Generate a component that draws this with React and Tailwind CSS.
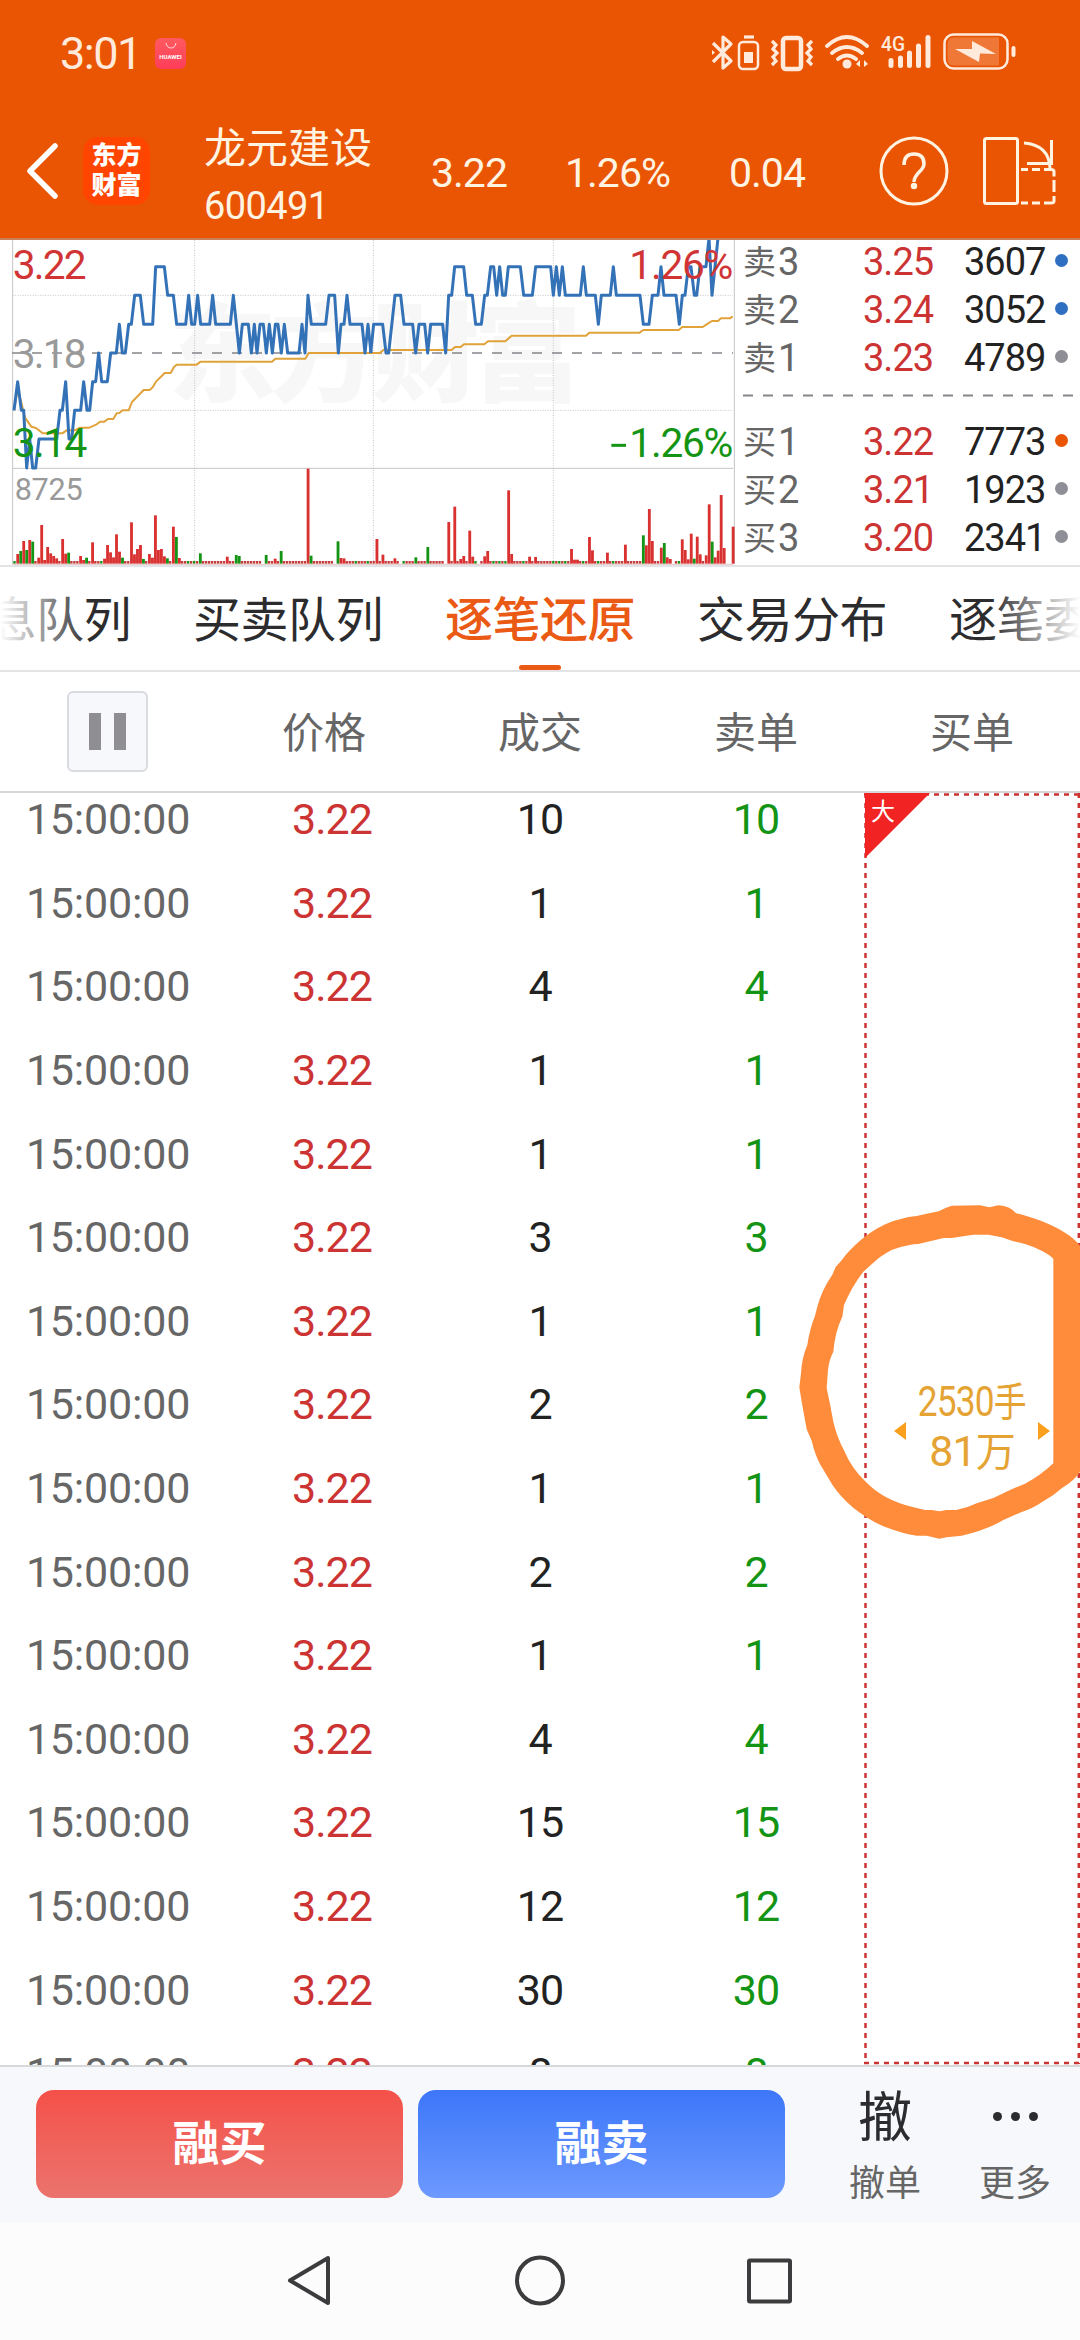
import React from "react";

// quotes shown next to the chart
const asks = [
  { label: "卖3", price: "3.25", volume: "3607", dot: "bg-[#2f6fc1]" },
  { label: "卖2", price: "3.24", volume: "3052", dot: "bg-[#2f6fc1]" },
  { label: "卖1", price: "3.23", volume: "4789", dot: "bg-[#8e8e96]" },
];

const bids = [
  { label: "买1", price: "3.22", volume: "7773", dot: "bg-[#ea5504]" },
  { label: "买2", price: "3.21", volume: "1923", dot: "bg-[#8e8e96]" },
  { label: "买3", price: "3.20", volume: "2341", dot: "bg-[#8e8e96]" },
];

const tabs = ["信息队列", "买卖队列", "逐笔还原", "交易分布", "逐笔委托"];

const trades = [10, 1, 4, 1, 1, 3, 1, 2, 1, 2, 1, 4, 15, 12, 30, 8];

// the chart is drawn three units to the pixel
const priceMorning =
  "42,541 53,455 64,541 71,541 80,714 89,627 98,714 107,714 117,627 170,627 180,541 187,541 197,455 207,627 215,627 224,541 242,541 251,455 261,541 269,541 278,455 287,455 296,369 305,455 322,455 332,369 349,369 358,283 367,369 376,369 386,283 394,283 404,196 421,196 431,283 458,283 467,110 493,110 503,196 520,196 530,283 557,283 566,196 575,283 584,283 593,196 602,283 629,283 638,196 647,283 691,283 700,196 718,369 727,283 745,283 754,369 763,283 771,369 780,283 790,283 799,369 808,283 817,369 826,283 834,283 844,369 853,283 863,369 897,369 906,283 915,369 924,196 934,283 977,283 987,196 1004,196 1015,369 1023,283 1032,283 1041,196 1050,283 1086,283 1095,369 1104,283 1113,369";
const priceAfternoon =
  "2,369 11,283 38,283 48,369 56,369 75,196 92,196 102,283 128,283 137,369 147,283 164,283 173,369 182,283 218,283 227,369 236,196 245,196 254,110 281,110 290,196 307,196 317,283 334,283 344,196 352,196 362,110 371,110 380,196 389,110 398,196 406,196 415,110 451,110 461,196 487,196 497,110 542,110 550,196 559,110 568,196 577,110 586,196 631,196 640,110 649,196 676,196 685,283 694,196 721,196 730,110 739,196 810,196 820,283 837,283 847,196 864,196 873,110 882,196 918,196 928,283 937,196 945,196 955,110 963,110 973,196 980,196 990,110 1008,110 1017,24 1026,196 1035,110 1044,24";
const avgMorning =
  "42,541 53,480 62,510 75,563 94,590 108,594 128,610 187,610 200,601 224,601 240,593 268,593 290,583 300,575 313,575 324,567 340,567 350,550 358,549 368,541 386,541 396,516 431,480 449,480 458,472 468,455 494,429 512,429 522,411 530,404 590,404 602,395 816,395 826,386 916,386 926,369 1112,369";
const avgAfternoon =
  "0,369 30,369 40,360 245,360 255,351 272,351 282,343 343,343 354,334 406,334 425,317 648,317 658,308 809,308 820,300 926,300 937,291 998,291 1010,283 1026,273 1044,273 1053,265 1080,265 1088,259";

// minute index -> height of the volume bar, every other minute has the small default
const volumes = {
  1: 29, 2: 38, 3: 68, 4: 41, 5: 71, 6: 66, 8: 18, 9: 116, 10: 11, 11: 50, 12: 31, 13: 23, 14: 16,
  16: 74, 17: 30, 18: 33, 22: 23, 23: 11, 24: 18, 26: 64, 30: 15, 31: 56, 32: 34, 33: 19, 34: 88,
  35: 36, 36: 18, 39: 124, 40: 28, 41: 44, 42: 56, 43: 14, 45: 29, 46: 18, 47: 145, 48: 41, 49: 44,
  50: 22, 51: 16, 53: 111, 54: 80, 55: 17, 62: 31, 71: 21, 74: 26, 75: 23, 83: 0, 84: 26, 87: 15,
  89: 38, 98: 285, 99: 24, 107: 0, 108: 67, 109: 17, 110: 16, 121: 74, 123: 27, 127: 16, 129: 0,
  134: 19, 138: 50, 144: 0, 145: 125, 147: 171, 149: 14, 150: 23, 152: 99, 153: 21, 155: 0, 157: 22,
  158: 38, 165: 220, 166: 29, 172: 21, 174: 20, 186: 44, 187: 12, 188: 12, 192: 80, 193: 40, 198: 33,
  204: 57, 210: 85, 211: 55, 212: 164, 213: 68, 216: 48, 217: 62, 218: 19, 219: 14, 220: 0, 223: 73,
  224: 41, 225: 13, 226: 90, 227: 15, 228: 81, 229: 28, 231: 25, 232: 178, 233: 66, 234: 19, 235: 39,
  236: 206, 237: 47, 238: 0, 239: 0, 240: 111,
};
const greenMinutes = [
  0, 2, 4, 6, 18, 24, 29, 36, 43, 51, 54, 58, 60, 62, 74, 75, 84, 89, 99, 108, 114, 118, 130, 134, 138,
  154, 160, 162, 164, 170, 180, 182, 184, 190, 195, 200, 210, 217, 222, 227, 233,
];

const StatusIcons = () => (
  <svg width="310" height="44" viewBox="710 31 310 44" fill="none" stroke="#ffeadc" strokeWidth="3.2">
    {/* bluetooth */}
    <path d="M712 43l18 18-8 7V37l8 7-18 18" strokeLinejoin="round" />
    <path d="M711 50l3 2.500-3 2.500z" fill="#ffeadc" stroke="none" />
    {/* headset battery */}
    <rect x="738" y="42" width="19" height="27" rx="4" strokeWidth="2.500" />
    <path d="M743 37h10" />
    <path d="M743 52h9v11h-9z" fill="#ffeadc" stroke="none" />
    {/* vibrate */}
    <rect x="782" y="38" width="18" height="31" rx="3" strokeWidth="4.500" />
    <path d="M771 41l4 4-3 4 4 4-4 4 3 4-4 4M811 41l-4 4 3 4-4 4 4 4-3 4 4 4" />
    {/* wifi */}
    <path d="M826 46q20-18 40 0M831 53q15-12 30 0M837 59q9-7 18 0" strokeWidth="3.800" strokeLinecap="round" />
    <circle cx="846" cy="64" r="4.500" fill="#ffeadc" stroke="none" />
    <path d="M859 60v7l-4-3zM863 60v7l4-3z" fill="#ffeadc" stroke="none" />
    {/* signal */}
    <g strokeWidth="5" strokeLinecap="round">
      <path d="M890 60.500v5M899.500 58v7.500M908.500 53v12.500M917.500 46v19.500M927 37.500v28" />
    </g>
    <text x="880" y="51" fill="#ffeadc" stroke="none" className="font-['Roboto',sans-serif] text-[21px] font-medium" textLength="24" lengthAdjust="spacingAndGlyphs">
      4G
    </text>
    {/* battery */}
    <rect x="943.500" y="34.500" width="63" height="34" rx="9" strokeWidth="2.500" />
    <path d="M953 37.500h45v28h-45q-6.500 0-6.500-7v-14q0-7 6.500-7z" fill="#f07837" stroke="none" />
    <path d="M954 49l17 0v-8l24 13-16-.5-1 8.500z" fill="#ffeadc" stroke="none" />
    <path d="M1012.500 48v7" strokeWidth="4" strokeLinecap="round" />
  </svg>
);

const Header = () => (
  <header className="h-[240px] shrink-0 bg-[#ea5504] text-[#fff3e2] border-b-2 border-[#c98059]">
    <div className="h-[104px] flex items-center pl-[60px] pr-[59px] pt-[2px]">
      <span className="text-[45px] leading-none tracking-[-1.5px] text-[#ffeadc] w-[95px]">3:01</span>
      <div className="w-[31px] h-[31px] rounded-[6px] bg-linear-to-b from-[#ff5960] to-[#ff3c5a] flex flex-col items-center">
        <svg width="12" height="8" viewBox="0 0 12 8" className="mt-[4px]" fill="none" stroke="#ffd9d9">
          <path d="M1 1q1 5 5 5t5-5" />
        </svg>
        <span className="text-[6px] leading-none font-bold text-white mt-[4px]">HUAWEI</span>
      </div>
      <div className="ml-auto -mt-px">
        <StatusIcons />
      </div>
    </div>

    <div className="h-[134px] flex items-center">
      <svg width="33" height="56" viewBox="0 0 33 56" className="ml-[26px]" fill="none" stroke="white" strokeWidth="5.500" strokeLinecap="round" strokeLinejoin="round">
        <path d="M29 3L4 28l25 25" />
      </svg>
      <div className="ml-[24px] w-[67px] h-[68px] rounded-[15px] bg-[#ff4500] text-white text-[25px] leading-[30px] font-black flex flex-col items-center justify-center">
        <span>东方</span>
        <span>财富</span>
      </div>
      <div className="ml-[54px] w-[227px] flex flex-col pt-[16px]">
        <span className="text-[42px] leading-[54px]">龙元建设</span>
        <span className="text-[38px] leading-[60px] tracking-[-0.6px]">600491</span>
      </div>
      <div className="flex text-[41px] leading-none pt-[4px] tracking-[-1px]">
        <span className="w-[134px]">3.22</span>
        <span className="w-[164px]">1.26%</span>
        <span>0.04</span>
      </div>
      <svg width="70" height="70" viewBox="0 0 70 70" className="ml-auto mr-[33px]" fill="none" stroke="#fff3e2" strokeWidth="3">
        <circle cx="35" cy="35" r="33" />
        <path d="M25 29q0-11 10-11t10 10c0 7-10 9-10 18" strokeWidth="3.500" />
        <circle cx="35" cy="50" r="3.200" fill="#fff3e2" stroke="none" />
      </svg>
      <svg width="74" height="70" viewBox="0 0 74 70" className="mr-[24px]" fill="none" stroke="#fff3e2" strokeWidth="3">
        <rect x="2.500" y="2.500" width="33" height="65" rx="2" />
        <path d="M42 7q25 2 26 25M69.500 4v23.500H45" />
        <path d="M39 33.500h7M50 33.500h8M62 33.500h7q3 0 3 2v5M72 44v12M72 60v5q0 2-3 2h-7M58 67h-8M46 67h-7" />
      </svg>
    </div>
  </header>
);

const Chart = () => (
  <svg width="738" height="326" viewBox="0 30 2214 978" className="shrink-0">
    <text x="505" y="490" textLength="1240" fill="#f7f7f7" className="text-[325px] font-black">
      东方财富
    </text>

    {/* grid */}
    <g stroke="#c4c4c8" strokeWidth="3" fill="none">
      <path d="M38 30V1003M2203 30V1003M38 715H2199" />
      <path d="M38 196H2199M38 541H2199M584 30V1000M1120 30V1000M1660 30V1000" strokeDasharray="3 4.500" />
    </g>
    <path d="M36 369H2199" stroke="#85858a" strokeWidth="5" strokeDasharray="30 30" />

    <g className="text-[122px]">
      <text x="38" y="413" fill="#999" textLength="222">3.18</text>
    </g>

    {/* average and price lines */}
    <g fill="none" strokeLinejoin="round">
      <g stroke="#e0a23a" strokeWidth="6">
        <polyline points={avgMorning} />
        <polyline points={avgAfternoon} transform="translate(1110 0)" />
      </g>
      <g stroke="#3472b8" strokeWidth="9">
        <polyline points={priceMorning} />
        <polyline points={priceAfternoon} transform="translate(1110 0)" />
      </g>
    </g>

    <g className="text-[122px]">
      <text x="38" y="146" fill="#d13434" textLength="222">3.22</text>
      <text x="38" y="680" fill="#149414" textLength="224">3.14</text>
      <text x="1888" y="146" fill="#d13434" textLength="312">1.26%</text>
      <text x="1888" y="680" fill="#149414" textLength="312">1.26%</text>
      <path d="M1834 646h44" stroke="#149414" strokeWidth="9" />
    </g>
    <text x="44" y="811" fill="#999" textLength="204" className="text-[92px]">8725</text>

    {/* volume bars */}
    {Array.from({ length: 241 }, (_, i) => {
      const height = volumes[i] ?? 8;
      return (
        <rect
          key={i}
          x={40 + i * 8.98}
          y={1001 - height}
          width={height > 8 ? 8.5 : 7}
          height={height}
          fill={greenMinutes.includes(i) ? "#149414" : height > 8 ? "#d93030" : "#c23a3a"}
        />
      );
    })}
    <path d="M38 1003H2199" stroke="#d8a8a8" strokeWidth="2" />
  </svg>
);

const QuoteRow = ({ quote }) => (
  <div className="h-[48px] flex items-center text-[38px] leading-none tracking-[-1px]">
    <div className="w-[120px] flex items-center text-[#666]">
      <span className="text-[33px] tracking-normal">{quote.label[0]}</span>
      <span className="ml-[2px]">{quote.label[1]}</span>
    </div>
    <span className="w-[101px] text-[#cc3333]">{quote.price}</span>
    <span className="w-[91px] text-[#222]">{quote.volume}</span>
    <i className={`w-[13px] h-[13px] rounded-full -mt-[3px] ${quote.dot}`} />
  </div>
);

const OrderBook = () => (
  <div className="flex-1 pl-[5px] -mt-[2px]">
    {asks.map((quote) => (
      <QuoteRow key={quote.label} quote={quote} />
    ))}
    <div className="h-[36px] pt-[12px]">
      <svg width="331" height="3">
        <path d="M0 1.500H331" stroke="#85858a" strokeWidth="2" strokeDasharray="10 10" />
      </svg>
    </div>
    {bids.map((quote) => (
      <QuoteRow key={quote.label} quote={quote} />
    ))}
  </div>
);

const Tabs = () => (
  <nav className="relative h-[105px] shrink-0 border-b-2 border-[#e4e4e6] flex justify-center gap-[62px] overflow-hidden whitespace-nowrap text-[48px] text-[#2c2c2e]">
    {tabs.map((tab) => (
      <div key={tab} className={`shrink-0 flex flex-col items-center ${tab === "逐笔还原" ? "text-[#ea5a14] font-medium" : ""}`}>
        <span className="h-[98px] leading-[107px] tracking-[-0.5px]">{tab}</span>
        {tab === "逐笔还原" && <i className="w-[42px] h-[6px] rounded-[3px] bg-[#ea5a14]" />}
      </div>
    ))}
    <div className="absolute inset-y-0 left-0 w-[90px] bg-linear-to-r from-white to-transparent" />
    <div className="absolute inset-y-0 right-0 w-[90px] bg-linear-to-l from-white to-transparent" />
  </nav>
);

const TableHead = () => (
  <div className="h-[121px] shrink-0 grid grid-cols-5 items-center border-b-2 border-[#d6d8da] text-center text-[42px] leading-none text-[#666]">
    <div className="flex justify-center">
      <button className="w-[81px] h-[81px] rounded-[6px] border-2 border-[#d9dbe0] bg-[#f6f8fb] flex items-center justify-center gap-[13px] mr-[2px]">
        <i className="w-[12px] h-[37px] bg-[#8e8e93]" />
        <i className="w-[12px] h-[37px] bg-[#8e8e93]" />
      </button>
    </div>
    <span className="pt-[4px]">价格</span>
    <span className="pt-[4px]">成交</span>
    <span className="pt-[4px]">卖单</span>
    <span className="pt-[4px]">买单</span>
  </div>
);

const TradeRow = ({ amount }) => (
  <div className="h-[83.6px] shrink-0 grid grid-cols-4 items-center text-center text-[43px] leading-none tracking-[-1px]">
    <span className="text-[#666] tracking-[-0.2px]">15:00:00</span>
    <span className="text-[#cc3333] pl-[16px]">3.22</span>
    <span className="text-[#222]">{amount}</span>
    <span className="text-[#149414]">{amount}</span>
  </div>
);

const BuyOrder = () => (
  <div className="relative flex-1">
    <svg width="216" height="1272" className="absolute inset-0" fill="none" stroke="#cc3333" strokeWidth="2.500" strokeDasharray="5 5">
      <path d="M0 1.500H216M1.500 0V1271M214.800 0V1271M0 1270H216" />
      <path d="M1 0H66L1 65z" fill="#f22323" stroke="none" />
    </svg>
    <span className="absolute left-[7px] top-[7px] text-[24px] leading-none text-white">大</span>

    <div className="absolute left-[30px] top-[584px] w-[156px] flex items-center justify-between text-[#e5a334]">
      <svg width="12" height="18" className="mt-[7px]">
        <path d="M12 0v18L0 9z" fill="#fba01e" />
      </svg>
      <div className="flex flex-col items-center text-[43px] leading-[49px] tracking-[-1px] whitespace-nowrap w-[110px]">
        <span className="scale-x-[0.82]">
          2530<span className="text-[40px]">手</span>
        </span>
        <span>
          81<span className="text-[40px]">万</span>
        </span>
      </div>
      <svg width="12" height="18" className="mt-[7px]">
        <path d="M0 0v18L12 9z" fill="#fba01e" />
      </svg>
    </div>
  </div>
);

// marker stroke drawn over the table
const MarkerCircle = () => (
  <svg width="300" height="360" viewBox="0 0 900 1080" className="absolute left-[780px] top-[397px]">
    <path
      fill="#ff8c3a"
      fillRule="evenodd"
      d="M900 168Q885 146 855 128C810 100 760 82 708 70Q690 48 655 46L628 52L600 46L515 47Q495 53 476 64L440 71L410 78L385 81L340 93Q290 110 245 148Q205 182 185 211L167 231L157 254Q125 300 112 350L105 377Q88 420 82 465Q65 505 63 550L58 592L65 635L80 718L95 752Q105 795 122 826L158 886C190 935 250 985 318 1012Q370 1032 410 1037L440 1037L478 1046L500 1042L545 1037Q620 1020 670 990L725 966Q760 955 785 937L820 915L845 895Q885 870 900 845ZM820 206V820Q780 858 735 881L690 900L640 924L590 940Q560 955 528 960L500 960L478 964L455 960L435 960L395 950Q310 930 258 876Q215 835 194 785Q170 740 160 695Q150 640 140 594L144 540Q147 510 160 485Q165 425 187 380L192 345Q215 290 250 245L275 223Q300 198 335 180Q370 168 400 163L415 162L475 148L490 144L515 144L580 134L625 134L665 142L700 154Q760 165 808 196Z"
    />
  </svg>
);

const BottomBar = () => (
  <div className="h-[157px] shrink-0 bg-[#f6f8fb] border-t-2 border-[#d6d8da] flex pl-[36px]">
    <div className="flex gap-[15px] pt-[23px] text-[47px] font-bold text-white">
      <button className="w-[367px] h-[108px] rounded-[18px] bg-linear-to-b from-[#f45049] to-[#eb736d]">融买</button>
      <button className="w-[367px] h-[108px] rounded-[18px] bg-linear-to-b from-[#3c76f8] to-[#6d99ff]">融卖</button>
    </div>
    <div className="flex ml-[64px] gap-[58px] text-[36px] text-[#666]">
      <div className="flex flex-col items-center">
        <span className="text-[54px] leading-[104px] h-[99px] text-[#2c2c2e]">撤</span>
        <span className="leading-[36px]">撤单</span>
      </div>
      <div className="flex flex-col items-center">
        <div className="h-[99px] flex gap-[9px] pt-[45px]">
          <i className="w-[9px] h-[9px] rounded-full bg-[#2c2c2e]" />
          <i className="w-[9px] h-[9px] rounded-full bg-[#2c2c2e]" />
          <i className="w-[9px] h-[9px] rounded-full bg-[#2c2c2e]" />
        </div>
        <span className="leading-[36px]">更多</span>
      </div>
    </div>
  </div>
);

const SystemNav = () => (
  <div className="flex-1 bg-[#fcfcfc] flex justify-center">
    <svg width="520" height="118" viewBox="280 2222 520 118" fill="none" stroke="#3c3c3e" strokeWidth="4" strokeLinejoin="round">
      <path d="M328 2258v45L290 2280.500z" />
      <circle cx="540" cy="2280.500" r="23" />
      <rect x="749" y="2260.500" width="41" height="41" rx="1" />
    </svg>
  </div>
);

const App = () => {
  return (
    <div className="w-[1080px] h-[2340px] overflow-hidden flex flex-col bg-white font-['Roboto','Noto_Sans_CJK_SC',sans-serif]">
      <Header />

      <section className="h-[327px] shrink-0 flex border-b-2 border-[#e4e4e6] overflow-hidden">
        <Chart />
        <OrderBook />
      </section>

      <Tabs />
      <TableHead />

      <main className="relative h-[1272px] shrink-0 flex">
        <div className="w-[864px] overflow-hidden">
          <div className="-mt-[15px] flex flex-col">
            {trades.map((amount, i) => (
              <TradeRow key={i} amount={amount} />
            ))}
          </div>
        </div>
        <BuyOrder />
        <MarkerCircle />
      </main>

      <BottomBar />
      <SystemNav />
    </div>
  );
};

export default App;
